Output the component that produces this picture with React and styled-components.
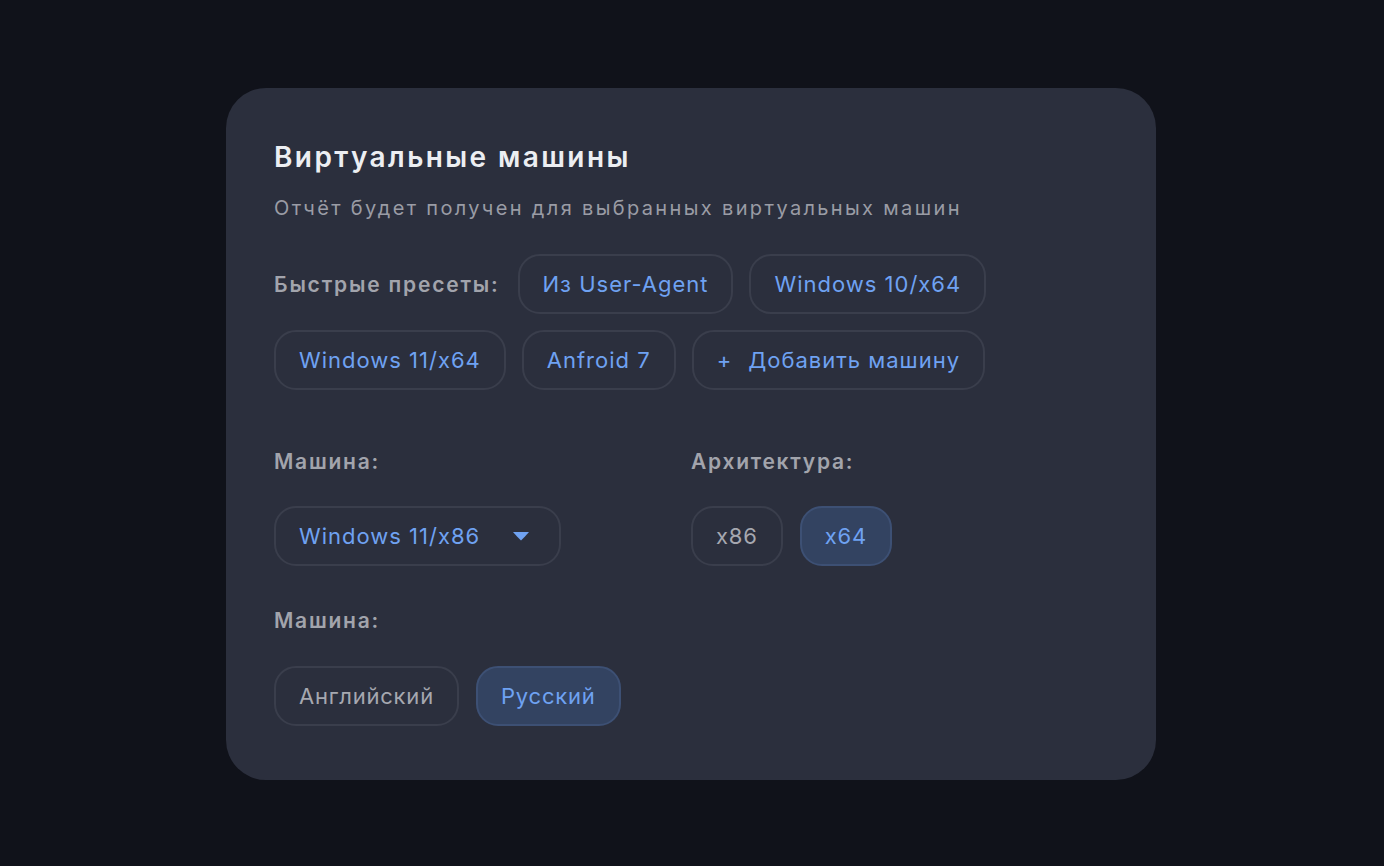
import React, { useState } from "react";
import styled, { createGlobalStyle } from "styled-components";

const GlobalStyle = createGlobalStyle`
  html, body {
    margin: 0;
    padding: 0;
    background: #10121a;
  }
  body {
    font-family: Inter, "Noto Sans", "Liberation Sans", sans-serif;
    -webkit-font-smoothing: antialiased;
  }
`;

const Page = styled.div`
  min-height: 866px;
  display: flex;
  justify-content: center;
  padding: 88px 2px 0 0;
  box-sizing: border-box;
`;

const Card = styled.section`
  width: 930px;
  height: 692px;
  box-sizing: border-box;
  background: #2b2f3d;
  border-radius: 40px;
  padding: 50px 48px 0;
`;

const Title = styled.h2`
  margin: 0;
  font-size: 28px;
  line-height: 38px;
  font-weight: 600;
  color: #eceef2;
  letter-spacing: 2.4px;
`;

const Subtitle = styled.p`
  margin: 19px 0 0;
  font-size: 20px;
  line-height: 26px;
  color: #9a9ca5;
  letter-spacing: 2.35px;
`;

const Presets = styled.div`
  display: flex;
  flex-wrap: wrap;
  align-items: center;
  gap: 16px;
  margin-top: 33px;
`;

const Label = styled.span`
  font-size: 21px;
  font-weight: 600;
  color: #a2a4ac;
  letter-spacing: 1.8px;
  margin-right: 2px;
`;

const Chip = styled.button`
  height: 60px;
  box-sizing: border-box;
  padding: 0 23px;
  border-radius: 22px;
  font-family: inherit;
  font-size: 22px;
  letter-spacing: ${(p) => (p.$muted ? "0.8px" : "1px")};
  display: inline-flex;
  align-items: center;
  gap: 16px;
  cursor: pointer;
  border: 2px solid ${(p) => (p.$active ? "#3d5074" : "#3a3e4c")};
  background: ${(p) => (p.$active ? "#334361" : "transparent")};
  color: ${(p) => (p.$muted && !p.$active ? "#a6a8b0" : "#6fa2f2")};
`;

const Grid = styled.div`
  display: grid;
  grid-template-columns: 1fr 1fr;
  margin-top: 59px;
`;

const Field = styled.div`
  display: flex;
  flex-direction: column;
  align-items: flex-start;
  gap: ${(p) => p.$gap || 31}px;
  margin-bottom: 42px;
`;

const FieldLabel = styled.div`
  font-size: 21px;
  line-height: 26px;
  font-weight: 600;
  color: #a2a4ac;
  letter-spacing: 1.75px;
`;

const Options = styled.div`
  display: flex;
  gap: 17px;
`;

const Select = styled(Chip)`
  width: 287px;
  justify-content: space-between;
  padding-right: 30px;
`;

const Caret = () => (
  <svg width="16" height="9" viewBox="0 0 16 9">
    <path d="M0 0h16l-4 4.5-4 4-4-4z" fill="#6fa2f2" />
  </svg>
);

const presets = ["Из User-Agent", "Windows 10/x64", "Windows 11/x64", "Anfroid 7"];

export default function App() {
  const [arch, setArch] = useState("x64");
  const [lang, setLang] = useState("Русский");

  return (
    <>
      <GlobalStyle />
      <Page>
        <Card>
          <Title>Виртуальные машины</Title>
          <Subtitle>Отчёт будет получен для выбранных виртуальных машин</Subtitle>

          <Presets>
            <Label>Быстрые пресеты:</Label>
            {presets.map((p) => (
              <Chip key={p}>{p}</Chip>
            ))}
            <Chip>
              <span>+</span>
              Добавить машину
            </Chip>
          </Presets>

          <Grid>
            <Field>
              <FieldLabel>Машина:</FieldLabel>
              <Select>
                Windows 11/x86
                <Caret />
              </Select>
            </Field>
            <Field>
              <FieldLabel>Архитектура:</FieldLabel>
              <Options>
                {["x86", "x64"].map((a) => (
                  <Chip key={a} $muted $active={arch === a} onClick={() => setArch(a)}>
                    {a}
                  </Chip>
                ))}
              </Options>
            </Field>
            <Field $gap={32}>
              <FieldLabel>Машина:</FieldLabel>
              <Options>
                {["Английский", "Русский"].map((l) => (
                  <Chip key={l} $muted $active={lang === l} onClick={() => setLang(l)}>
                    {l}
                  </Chip>
                ))}
              </Options>
            </Field>
          </Grid>
        </Card>
      </Page>
    </>
  );
}
